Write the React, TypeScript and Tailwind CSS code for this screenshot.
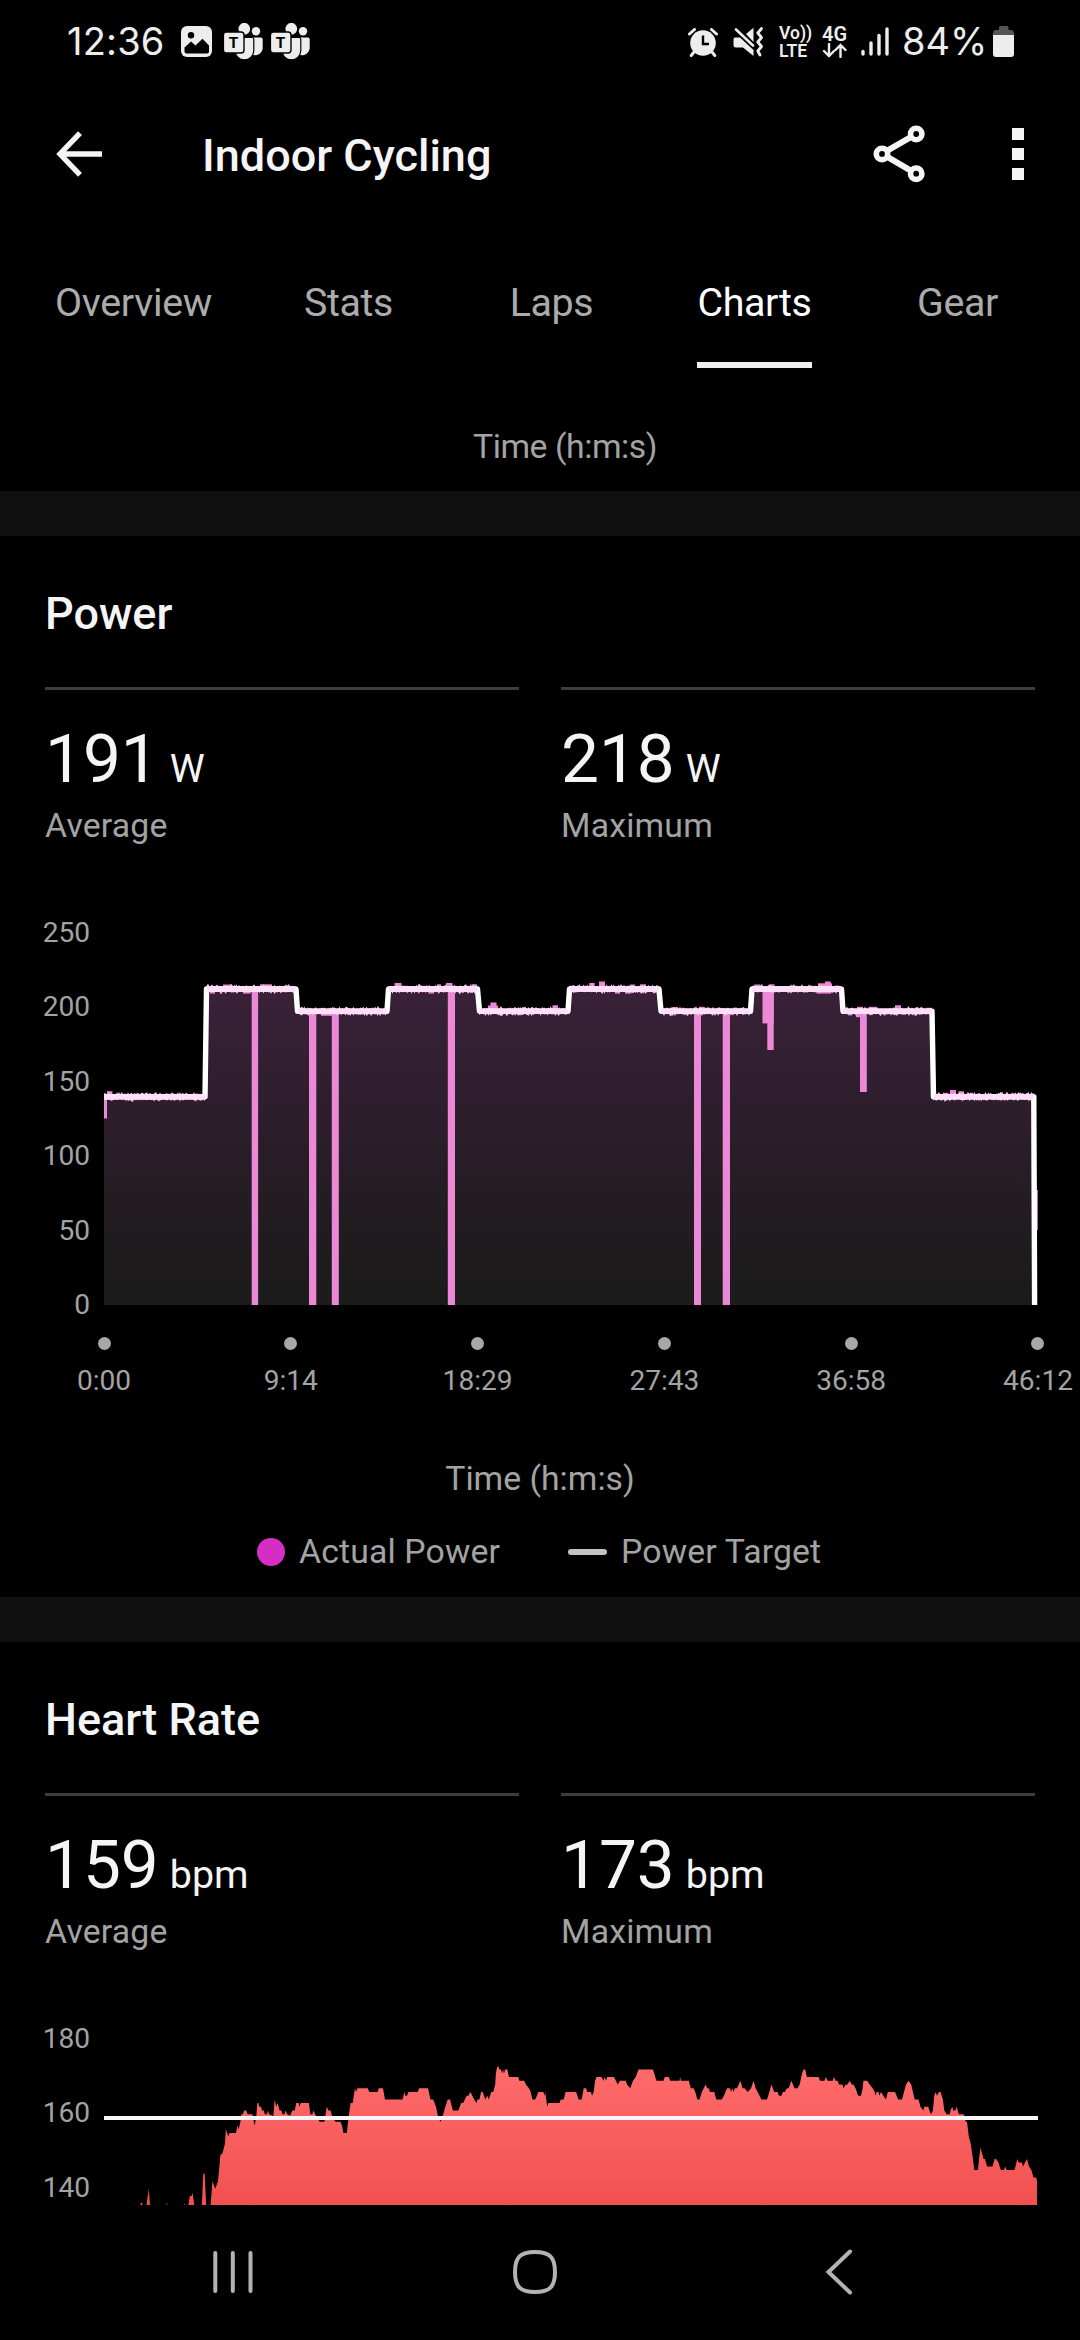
/**
 * Activity detail - Charts tab
 *
 * Power and heart rate charts for an indoor cycling workout.
 */

import React from 'react';

type Point = [number, number];

const PLOT_WIDTH = 934;
const PLOT_LEFT = 104;

const tabs = ['Overview', 'Stats', 'Laps', 'Charts', 'Gear'];
const powerTicks = ['250', '200', '150', '100', '50', '0'];
const heartTicks = ['180', '160', '140'];
const timeTicks = ['0:00', '9:14', '18:29', '27:43', '36:58', '46:12'];

// Workout steps: x start, x end, y of the target
const steps: [number, number, number][] = [
  [104, 205, 1096.8],
  [206.5, 296, 989],
  [297.5, 387, 1011.3],
  [388.5, 477.5, 989],
  [479.5, 568, 1011.3],
  [569.5, 659, 989],
  [661, 750.5, 1011.3],
  [752, 841.5, 989],
  [843, 932, 1011.3],
  [933.5, 1033.8, 1096.8],
];

// Pink bars where the actual power left the target: x, y, width, height
const spikes: [number, number, number, number][] = [
  [251.7, 989, 6.4, 316],
  [309, 1011, 7.3, 294],
  [331.8, 1011, 7, 294],
  [447.8, 989, 7.2, 316],
  [694, 1011, 7, 294],
  [722.7, 1011, 7.3, 294],
  [762.5, 989, 11.2, 34.4],
  [767.3, 989, 6.4, 61],
  [860, 1011, 6.8, 81],
  [104, 1097, 3, 21.5],
  [1035, 1190, 2.8, 40],
  [107, 1091.2, 5.4, 5],
  [223, 984.5, 9, 5],
  [260, 984.3, 12, 5],
  [394.5, 983, 7, 5],
  [437, 984.3, 4, 5],
  [446, 983, 6.5, 5],
  [471.5, 984.3, 5.5, 5],
  [490.5, 1002.5, 6, 8],
  [488, 1005.5, 10, 5],
  [552.5, 1005.3, 5.5, 5],
  [589.3, 983, 5.3, 5],
  [599, 981.5, 6, 6],
  [630, 984.5, 5, 5],
  [640, 984.3, 6, 5],
  [672, 1007, 6, 5],
  [699, 1006.8, 5.5, 5],
  [754.5, 984.5, 6, 5],
  [769.3, 984.3, 5.2, 5],
  [818, 983.3, 14, 5],
  [825, 981.5, 5.7, 5],
  [857, 1006.8, 6, 5],
  [868.5, 1006.8, 9, 5],
  [895, 1005.3, 6, 5],
  [943, 1092.8, 5.5, 4],
  [950, 1090, 6, 5],
  [958.5, 1091.3, 5.5, 5],
  [210, 989, 5, 4.6],
  [243, 989, 7, 4.6],
  [321, 1011, 11, 4.8],
  [428.5, 989, 5.5, 4.6],
  [615, 989, 5, 4.6],
  [625, 989, 6, 4.6],
  [816.5, 989, 15, 4.6],
  [856, 1011, 4.5, 6.2],
];

// Heart rate samples: x on the plot, beats per minute
const heartRate: Point[] = [
  [104, 130], [139.5, 135], [141, 136.2], [142, 136.2], [143, 135], [146.2, 135], [148.8, 140], [150.2, 135],
  [166, 135], [167, 136.2], [168, 135], [184, 135], [184.6, 136.2], [185.4, 135], [188, 135], [189.8, 138],
  [191.8, 138], [192.5, 139], [194.6, 135], [201.8, 135], [203.2, 144], [204.6, 144], [206.3, 135], [210.4, 135],
  [212.5, 142], [215.2, 140], [218, 142], [220.4, 149], [222.5, 149.5], [224.9, 152], [225.9, 156], [228.3, 154],
  [229.4, 155], [235.9, 155], [237.6, 157], [238.7, 156], [240.4, 158], [241.4, 160], [242.8, 160], [244.2, 161],
  [246.2, 161], [247.6, 160], [252.4, 160], [254.5, 157], [256.2, 159], [257.3, 163], [258.4, 163], [259.3, 162],
  [261, 162], [262, 161], [263.8, 161], [264.8, 160], [266.9, 160], [268, 161], [269, 160], [273.4, 159.5],
  [274.7, 164], [276.2, 162], [277.6, 163], [279.6, 161], [281.4, 161], [282.4, 160], [284.5, 160], [285.5, 161],
  [287.2, 160], [290, 159.6], [292.4, 161], [294.8, 161], [296.2, 163], [298.6, 163], [299.6, 162], [300.6, 163],
  [308.9, 163], [310.3, 160], [312.4, 160], [313.4, 161], [315, 160], [317.5, 159], [319.6, 158], [324.4, 158],
  [326.8, 162], [328.5, 161], [330.6, 161], [332.7, 159], [335.4, 158], [340.3, 158], [342, 157], [343.4, 155],
  [346.8, 155], [348.5, 159], [350.6, 163], [352.7, 163], [355, 167], [356, 166], [357.5, 167], [367.8, 167],
  [369.2, 166], [377.5, 166], [378.8, 167], [383, 167], [385, 164], [402.6, 164], [404.3, 166], [405.3, 165],
  [407, 165], [408.4, 166], [417.7, 166], [419.1, 167], [428, 167], [430.5, 164], [433.2, 164], [436, 162],
  [438.4, 159], [440.5, 158], [443.2, 160], [445.3, 162], [447.7, 164], [450, 164], [452.9, 161], [458.4, 161],
  [461.1, 163], [463.2, 163], [466.6, 165], [468.4, 165], [470.4, 166], [474.2, 164], [476.6, 163], [477.6, 164],
  [479.4, 164], [481.1, 166], [482.8, 166], [485.2, 164], [487.3, 165], [488.7, 164], [491.4, 166], [493.2, 166],
  [495.2, 168], [495.9, 171], [497, 172.6], [498.3, 173], [499.4, 172], [501, 172], [502, 171], [503, 172],
  [504, 171], [505, 172], [507.3, 172], [509, 170], [518.3, 170], [519.3, 169], [524.2, 169], [525.9, 168],
  [529, 167], [530.7, 166], [532.4, 164], [535.2, 164], [536.9, 165], [538.3, 166], [543.4, 166], [544.5, 165],
  [545.2, 166], [547.2, 162], [548.3, 163], [559.6, 163], [560.7, 164], [563.8, 164], [565.5, 166], [576.2, 166],
  [578.6, 164], [581.7, 164], [583.7, 167], [586.1, 167], [587.2, 166], [591, 166], [592, 165], [593.7, 166],
  [595.1, 169], [596.5, 170], [601.6, 170], [603.4, 169], [604.7, 170], [606, 169], [607.2, 170], [614, 170],
  [617.8, 168], [619.9, 169], [625.8, 169], [627.1, 168], [630.2, 167], [633, 169], [635.7, 170], [638.5, 172],
  [653, 172], [656.4, 169], [663.6, 169], [664.7, 170], [668.8, 170], [670.2, 169], [679.5, 169], [680.2, 170],
  [680.9, 169], [688.8, 169], [690.8, 167], [693.6, 167], [695.3, 166], [697.4, 164], [699.5, 164], [701.9, 166],
  [705.7, 168], [707, 167], [708.8, 167], [710, 166], [714.3, 166], [716.3, 164], [721.8, 164], [723.9, 165],
  [727, 167], [730, 167], [731, 166], [732.2, 167], [733.5, 166], [734.9, 167], [737, 167], [740.4, 169],
  [742.5, 167], [744.6, 167], [747.7, 166], [751.1, 167], [753.5, 169], [755.6, 167], [757.7, 166], [761.4, 164],
  [767, 164], [769.4, 166], [771.4, 168], [774.2, 166], [777.6, 166], [779, 165], [781.4, 165], [783, 166],
  [784.9, 166], [786.9, 167], [788.6, 167], [791.4, 169], [794.5, 167], [797.6, 167], [799.7, 168], [802, 171],
  [803.5, 172], [805.2, 172], [806.9, 170], [818.6, 170], [820, 169], [824.5, 169], [825.8, 170], [827.6, 169],
  [832.7, 169], [834.1, 170], [835.5, 169], [837.6, 169], [838.9, 168], [842.4, 168], [843.4, 167], [845.8, 168],
  [847.5, 168], [849.6, 169], [851.7, 168], [853.4, 168], [855.5, 167], [858.2, 165], [861, 165], [862.7, 167],
  [863.4, 169], [867.2, 169], [869.6, 168], [872.7, 167], [874.7, 166], [875.8, 165], [876.6, 166], [878.5, 166],
  [879.2, 165], [881, 166], [883.4, 165], [886, 164], [887.8, 166], [895, 166], [898.2, 164], [902, 164],
  [904, 166], [906, 168], [908.5, 169], [911.2, 168], [914.7, 164], [918.5, 164], [920.5, 162], [923.3, 161],
  [924.3, 162], [928.1, 162], [930.9, 160], [932.9, 161], [934.3, 165], [935.7, 166], [937, 165], [939, 166],
  [940.5, 166], [942.9, 164], [944.3, 161], [946.7, 160], [949.8, 160], [950.5, 161], [952.2, 162], [953.3, 161],
  [955.3, 161], [956.7, 162], [958.8, 160], [963.6, 160], [965.7, 158], [967, 158], [968.8, 154], [970.8, 152],
  [972.9, 148], [974.3, 145], [978, 145], [979, 148], [980.5, 151], [983.6, 148], [985, 148], [987, 146],
  [992.5, 146], [994.6, 148], [996, 148], [998.4, 147], [1000.8, 145], [1003.9, 145], [1005.3, 146], [1006.6, 145],
  [1014.6, 145], [1017.3, 148], [1018.7, 147], [1021.8, 147], [1023.2, 146], [1025, 147], [1027, 148], [1029, 146],
  [1031.4, 145], [1033.5, 143], [1036.3, 143], [1037, 142],
];

// Small repeatable noise, so that the power trace looks like sensor data
const noise = (n: number) => {
  const v = Math.sin(n * 12.9898) * 43758.5453;
  return v - Math.floor(v);
};

const ribbon = (amount: number) =>
  steps
    .map(([from, to, y]) => {
      const top: string[] = [];
      const bottom: string[] = [];
      for (let x = from; x <= to; x += 1) {
        top.push(`${x},${(y - 2.5 - Math.pow(noise(x), 3) * amount).toFixed(1)}`);
        bottom.unshift(`${x},${(y + 2.5 + Math.pow(noise(x + 500), 3) * amount).toFixed(1)}`);
      }
      return `M${top.join('L')}L${bottom.join('L')}Z`;
    })
    .join('');

const targetPath = 'M' + steps.map(([from, to, y]) => `${from},${y}L${to},${y}`).join('L') + 'L1034.6,1305';
const heartPath =
  'M104,2230L' + heartRate.map(([x, bpm]) => `${x},${(2118 - (bpm - 159) * 3.72).toFixed(1)}`).join('L') + 'L1037,2230Z';

const ImageIcon = () => (
  <svg className="h-[31px] w-[31px]" viewBox="0 0 31 31">
    <rect width="31" height="31" rx="6" fill="#ededed" />
    <circle cx="10" cy="9.3" r="3.2" fill="#000" />
    <path d="M3.5 21.5L10 15.5L14.5 19.5L21.5 12.8L28 19.5V25.5Q28 27.5 26 27.5H5.5Q3.5 27.5 3.5 25.5Z" fill="#000" />
  </svg>
);

const TeamsIcon = () => (
  <svg className="h-[37px] w-[39px]" viewBox="0 0 39 37">
    <circle cx="20.3" cy="5.8" r="5.9" fill="#ededed" />
    <circle cx="32" cy="8.2" r="4.2" fill="#ededed" />
    <path d="M28 14.5H37Q38.7 14.5 38.7 16.2V24.5A7.6 7.6 0 0 1 28.5 31.8Z" fill="#ededed" />
    <path d="M11 14.5H28Q29.8 14.5 29.8 16.2V27.5A9.4 9.4 0 0 1 11 27.5Z" fill="#ededed" stroke="#000" strokeWidth="1.2" />
    <rect x="-.6" y="9" width="20.6" height="21" rx="3" fill="#ededed" stroke="#000" strokeWidth="1.4" />
    <text x="9.6" y="25.3" textAnchor="middle" className="font-['Inter',sans-serif] text-[15px] font-bold" fill="#000">
      T
    </text>
  </svg>
);

const AlarmIcon = () => (
  <svg className="h-[29px] w-[30px]" viewBox="0 0 30 29">
    <circle cx="15" cy="15" r="12.8" fill="#ededed" />
    <path d="M1.5 6L6.5 1.5M28.5 6L23.5 1.5M6 24L3.2 27.5M24 24L26.8 27.5" stroke="#ededed" strokeWidth="3" strokeLinecap="round" />
    <path d="M15 7.5V16H21" stroke="#000" strokeWidth="2.4" fill="none" />
  </svg>
);

const MuteIcon = () => (
  <svg className="h-[30px] w-[31px]" viewBox="0 0 31 30">
    <path d="M2 10.5H7L20.5 23V29L10 20.5H3Q.5 20.5 .5 18V12.5Q.5 10.5 2 10.5Z" fill="#ededed" />
    <path d="M13 7L20.5 .8V15Z" fill="#ededed" />
    <path d="M3 2.5L20 18.5" stroke="#ededed" strokeWidth="2.6" strokeLinecap="round" />
    <path d="M28.5 1.5L24.8 6L28.5 10.5L24.8 15L28.5 19.5L24.8 24L27 28" stroke="#ededed" strokeWidth="2.8" fill="none" strokeLinecap="round" strokeLinejoin="round" />
  </svg>
);

const StatusBar: React.FC = () => (
  <div className="flex h-[84px] items-start pl-[67px] font-['Inter',sans-serif] text-[#ededed]">
    <span className="mt-[18px] w-[114px] text-[38px] leading-[46px] tracking-[0.2px]">12:36</span>
    <div className="mt-[23px] flex gap-2">
      <div className="mt-[3px] mr-[4px]"><ImageIcon /></div>
      <TeamsIcon />
      <TeamsIcon />
    </div>
    <div className="ml-auto flex items-start pr-[66px]">
      <div className="mt-[28px]"><AlarmIcon /></div>
      <div className="mt-[27px] ml-[15px]"><MuteIcon /></div>
      <div className="mt-[24px] ml-[15px] w-[34px] font-['Roboto',sans-serif] text-[17.5px] leading-[18px] font-semibold whitespace-nowrap">
        <div>Vo))</div>
        <div>LTE</div>
      </div>
      <div className="mt-[25px] ml-[9px] w-[26px]">
        <div className="font-['Roboto',sans-serif] text-[20px] leading-[18px] font-semibold">4G</div>
        <svg className="h-[15px] w-[25px]" viewBox="0 0 25 15">
          <path d="M7 1V13M2 8L7 13L12 8M18.5 14V2M13.5 7L18.5 2L23.5 7" stroke="#ededed" strokeWidth="2.4" fill="none" strokeLinecap="round" />
        </svg>
      </div>
      <svg className="mt-[27px] ml-[13px] h-[29px] w-[28px]" viewBox="0 0 28 29">
        <path d="M2 24.5V27M10 16V27M18 8.5V27M26 2V27" stroke="#ededed" strokeWidth="3.4" strokeLinecap="round" />
      </svg>
      <span className="mt-[18px] ml-[13px] w-[91px] text-[38px] leading-[46px]">84%</span>
      <svg className="mt-[26px] h-[31px] w-[21px]" viewBox="0 0 21 31">
        <path d="M7 0H14.5Q15.5 0 15.5 2V4H18Q21 4 21 7V10H0V7Q0 4 3 4H6V2Q6 0 7 0Z" fill="#555" />
        <path d="M0 9H21V28Q21 31 18 31H3Q0 31 0 28Z" fill="#ededed" />
      </svg>
    </div>
  </div>
);

const AppBar: React.FC = () => (
  <header className="flex h-[140px] items-center pr-[56px] pl-[56px]">
    <svg className="h-[46px] w-[46px]" viewBox="0 0 46 46">
      <path d="M24 2.2L4 23L24 43.8M4 23H46" stroke="#f5f5f5" strokeWidth="5.4" fill="none" />
    </svg>
    <h1 className="ml-[100px] pt-[3px] text-[45px] leading-[53px] font-medium text-[#f5f5f5]">Indoor Cycling</h1>
    <svg className="ml-auto h-[58px] w-[52px]" viewBox="873 124 52 58">
      <path d="M886.9 149.8L911.2 135.8M886.9 155.7L911.2 169.8" stroke="#f5f5f5" strokeWidth="6" />
      <g fill="none" stroke="#f5f5f5" strokeWidth="5.6">
        <circle cx="916.2" cy="133" r="5.7" />
        <circle cx="882" cy="152.9" r="5.7" />
        <circle cx="916.2" cy="172.7" r="5.7" />
      </g>
    </svg>
    <div className="ml-[87px] flex flex-col gap-2">
      <span className="h-3 w-3 bg-[#f5f5f5]" />
      <span className="h-3 w-3 bg-[#f5f5f5]" />
      <span className="h-3 w-3 bg-[#f5f5f5]" />
    </div>
  </header>
);

const TabBar: React.FC = () => (
  <nav className="grid h-[144px] grid-cols-[227px_203px_203px_203px_203px] justify-items-center pt-[56px] pl-[20px] text-[39.4px] leading-[46px] tracking-[-0.35px]">
    {tabs.map((tab) => (
      <div
        key={tab}
        className={tab === 'Charts' ? 'h-[88px] border-b-[6px] border-[#efeef3] text-white' : 'h-[88px] text-[#ababab]'}
      >
        {tab}
      </div>
    ))}
  </nav>
);

const Stat: React.FC<{ value: string; unit: string; label: string }> = ({ value, unit, label }) => (
  <div className="flex-1 border-t-[3px] border-[#3d3d3d] pt-[29px]">
    <div className="h-[80px] text-[67.5px] leading-[80px] text-[#f5f5f5]">
      {value}
      <span className="ml-[11px] text-[39.4px] leading-none">{unit}</span>
    </div>
    <div className="pt-[7px] text-[33.75px] leading-[40px] tracking-[0.2px] text-[#a3a3a3]">{label}</div>
  </div>
);

interface ChartSectionProps {
  title: string;
  unit: string;
  average: string;
  maximum: string;
  ticks: string[];
  children: React.ReactNode;
}

const ChartSection: React.FC<ChartSectionProps> = ({ title, unit, average, maximum, ticks, children }) => (
  <>
    <div className="px-[45px] pt-[51px]">
      <h2 className="text-[45px] leading-[53px] font-medium text-[#f5f5f5]">{title}</h2>
      <div className="mt-[47px] flex gap-[42px]">
        <Stat value={average} unit={unit} label="Average" />
        <Stat value={maximum} unit={unit} label="Maximum" />
      </div>
    </div>
    <div className="mt-[72px] flex h-[400px]">
      <div className="flex w-[104px] flex-col gap-[46.4px] pt-px pr-[14px] text-right text-[28.1px] leading-[28px] text-[#a3a3a3]">
        {ticks.map((tick) => (
          <span key={tick}>{tick}</span>
        ))}
      </div>
      {children}
    </div>
  </>
);

const PowerPlot: React.FC = () => (
  <svg className="h-[387px] w-[934px]" viewBox={`${PLOT_LEFT} 918 ${PLOT_WIDTH} 387`}>
    <defs>
      <linearGradient id="powerFill" gradientUnits="userSpaceOnUse" x1="0" y1="985" x2="0" y2="1305">
        <stop offset="0" stopColor="#3a2139" />
        <stop offset=".85" stopColor="#1e1b1d" />
        <stop offset="1" stopColor="#1b1b1b" />
      </linearGradient>
    </defs>
    <path d={`${targetPath}L104,1305Z`} fill="url(#powerFill)" />
    <g fill="#ec89d6">
      {spikes.map(([x, y, w, h], i) => (
        <rect key={i} x={x} y={y} width={w} height={h} />
      ))}
    </g>
    <path d={ribbon(2.6)} fill="#f0a5e0" />
    <path d={targetPath} fill="none" stroke="#fff" strokeWidth="5.4" strokeLinejoin="round" />
    <path d={ribbon(1)} fill="#ffdff8" />
  </svg>
);

const HeartPlot: React.FC = () => (
  <svg className="h-[181px] w-[934px]" viewBox={`${PLOT_LEFT} 2024 ${PLOT_WIDTH} 181`}>
    <defs>
      <linearGradient id="heartFill" gradientUnits="userSpaceOnUse" x1="0" y1="2066" x2="0" y2="2205">
        <stop offset="0" stopColor="#ff6b6c" />
        <stop offset="1" stopColor="#f15150" />
      </linearGradient>
    </defs>
    <path d={heartPath} fill="url(#heartFill)" />
    <path d="M104 2118H1038" stroke="#faf5fa" strokeWidth="4" />
  </svg>
);

const TimeAxis: React.FC = () => (
  <div className="mt-[19px] mr-[42px] ml-[104px] flex justify-between">
    {timeTicks.map((tick) => (
      <div key={tick} className="flex w-0 flex-col items-center">
        <span className="h-[13px] w-[13px] rounded-full bg-[#a8a8a8]" />
        <span className="mt-[17px] text-[28.1px] leading-[28px] whitespace-nowrap text-[#a3a3a3]">{tick}</span>
      </div>
    ))}
  </div>
);

const Legend: React.FC = () => (
  <div className="mt-[33px] flex items-center pl-[257px] text-[33.75px] leading-[40px] tracking-[0.15px] text-[#a3a3a3]">
    <span className="h-7 w-7 rounded-full bg-[#d62dc5]" />
    <span className="ml-[14px]">Actual Power</span>
    <span className="ml-[68px] h-[6px] w-[39px] rounded-full bg-[#c3c3c3]" />
    <span className="ml-[14px]">Power Target</span>
  </div>
);

const NavigationBar: React.FC = () => (
  <div className="flex h-[135px] items-center bg-black pb-[2px] pl-[212px]">
    <svg className="h-[44px] w-[42px]" viewBox="0 0 42 44" stroke="#b3b3b3" strokeWidth="4" strokeLinecap="round">
      <path d="M3.3 3V41M20.8 3V41M38.5 3V41" />
    </svg>
    <svg className="ml-[259px] h-[44px] w-[44px]" viewBox="0 0 44 44">
      <path d="M22 2C36.5 2 42 7 42 22S36.5 42 22 42S2 37 2 22S7.500 2 22 2Z" stroke="#b3b3b3" strokeWidth="4" fill="none" />
    </svg>
    <svg className="ml-[268px] h-[46px] w-[28px]" viewBox="0 0 28 46">
      <path d="M25 2.500L3.500 23L25 43.500" stroke="#b3b3b3" strokeWidth="4" strokeLinecap="round" fill="none" />
    </svg>
  </div>
);

const App: React.FC = () => (
  <div className="flex h-[2340px] w-[1080px] flex-col overflow-hidden bg-black font-['Roboto',sans-serif]">
    <StatusBar />
    <AppBar />
    <TabBar />
    <main className="h-[1837px] overflow-hidden">
      {/* End of the chart above */}
      <div className="h-[123px] pt-[59px] pl-[50px] text-center text-[33.75px] leading-[40px] tracking-[-0.45px] text-[#a3a3a3]">
        Time (h:m:s)
      </div>
      <div className="h-[45px] bg-[#101010]" />

      <section className="h-[1061px]">
        <ChartSection title="Power" unit="W" average="191" maximum="218" ticks={powerTicks}>
          <PowerPlot />
        </ChartSection>
        <TimeAxis />
        <div className="mt-[64px] text-center text-[33.75px] leading-[40px] text-[#a3a3a3]">Time (h:m:s)</div>
        <Legend />
      </section>
      <div className="h-[45px] bg-[#101010]" />

      <section>
        <ChartSection title="Heart Rate" unit="bpm" average="159" maximum="173" ticks={heartTicks}>
          <HeartPlot />
        </ChartSection>
      </section>
    </main>
    <NavigationBar />
  </div>
);

export default App;
